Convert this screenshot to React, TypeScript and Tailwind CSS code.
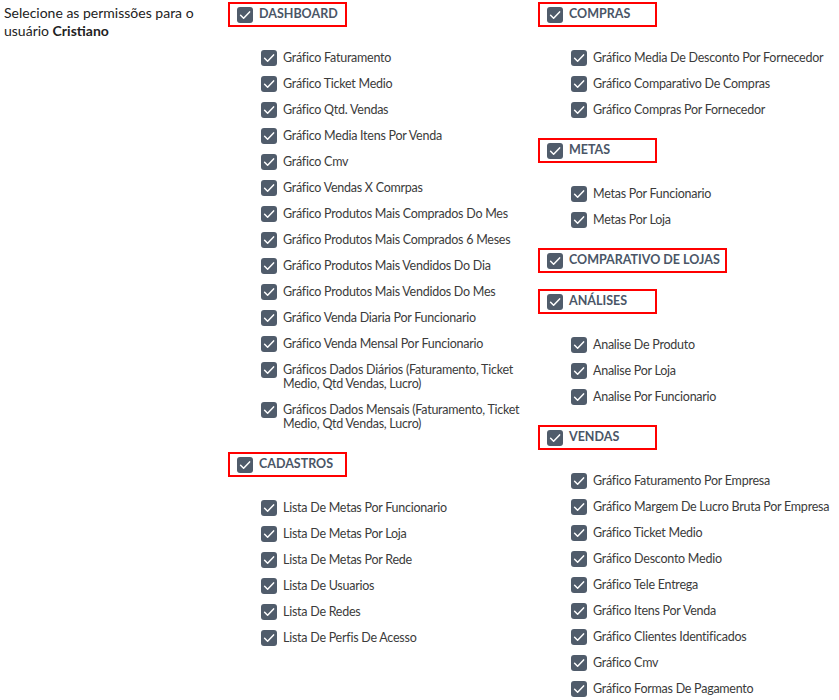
import type { ReactNode } from 'react';

interface Section {
  title: string;
  items: string[];
}

const leftSections: Section[] = [
  {
    title: 'DASHBOARD',
    items: [
      'Gráfico Faturamento',
      'Gráfico Ticket Medio',
      'Gráfico Qtd. Vendas',
      'Gráfico Media Itens Por Venda',
      'Gráfico Cmv',
      'Gráfico Vendas X Comrpas',
      'Gráfico Produtos Mais Comprados Do Mes',
      'Gráfico Produtos Mais Comprados 6 Meses',
      'Gráfico Produtos Mais Vendidos Do Dia',
      'Gráfico Produtos Mais Vendidos Do Mes',
      'Gráfico Venda Diaria Por Funcionario',
      'Gráfico Venda Mensal Por Funcionario',
      'Gráficos Dados Diários (Faturamento, Ticket Medio, Qtd Vendas, Lucro)',
      'Gráficos Dados Mensais (Faturamento, Ticket Medio, Qtd Vendas, Lucro)',
    ],
  },
  {
    title: 'CADASTROS',
    items: [
      'Lista De Metas Por Funcionario',
      'Lista De Metas Por Loja',
      'Lista De Metas Por Rede',
      'Lista De Usuarios',
      'Lista De Redes',
      'Lista De Perfis De Acesso',
    ],
  },
];

const rightSections: Section[] = [
  {
    title: 'COMPRAS',
    items: [
      'Gráfico Media De Desconto Por Fornecedor',
      'Gráfico Comparativo De Compras',
      'Gráfico Compras Por Fornecedor',
    ],
  },
  { title: 'METAS', items: ['Metas Por Funcionario', 'Metas Por Loja'] },
  { title: 'COMPARATIVO DE LOJAS', items: [] },
  {
    title: 'ANÁLISES',
    items: ['Analise De Produto', 'Analise Por Loja', 'Analise Por Funcionario'],
  },
  {
    title: 'VENDAS',
    items: [
      'Gráfico Faturamento Por Empresa',
      'Gráfico Margem De Lucro Bruta Por Empresa',
      'Gráfico Ticket Medio',
      'Gráfico Desconto Medio',
      'Gráfico Tele Entrega',
      'Gráfico Itens Por Venda',
      'Gráfico Clientes Identificados',
      'Gráfico Cmv',
      'Gráfico Formas De Pagamento',
    ],
  },
];

const CheckBox = () => (
  <span className="w-4 h-4 rounded-[3px] bg-[#505c6b] flex items-center justify-center flex-shrink-0">
    <svg viewBox="0 0 16 16" className="w-4 h-4" fill="none">
      <path d="M3.6 8.3 6.6 11.2 12.6 4.9" stroke="white" strokeWidth="1.5" strokeLinecap="round" strokeLinejoin="round" />
    </svg>
  </span>
);

const Item = ({ children, nowrap }: { children: ReactNode; nowrap?: boolean }) => (
  <div className="flex items-start gap-[6px]">
    <span className="h-[14px] flex items-center">
      <CheckBox />
    </span>
    <span
      className={`text-[12.5px] leading-[14px] tracking-[-0.25px] text-[#3b3b3b] ${nowrap ? 'whitespace-nowrap' : 'pr-[14px]'}`}
    >
      {children}
    </span>
  </div>
);

const SectionBlock = ({ section, nowrap }: { section: Section; nowrap?: boolean }) => (
  <div className="flex flex-col">
    {/* Header highlighted with the red frame */}
    <div className="self-start min-w-[119px] h-[25px] border-2 border-[#ff0000] pl-[7px] pr-[5px] flex items-center gap-[6px]">
      <CheckBox />
      <span className="text-[12.5px] font-bold text-[#4a5667] whitespace-nowrap">{section.title}</span>
    </div>
    {section.items.length > 0 && (
      <div className="mt-[23.5px] mb-[5.5px] pl-[33px] flex flex-col gap-[12px]">
        {section.items.map((item) => (
          <Item key={item} nowrap={nowrap}>
            {item}
          </Item>
        ))}
      </div>
    )}
  </div>
);

export default function App() {
  return (
    <div className="h-[700px] w-[839px] overflow-hidden bg-white flex font-['Lato','Open_Sans',sans-serif]">
      <div className="w-[228px] flex-shrink-0 pl-[4px] pt-[4px]">
        <p className="w-[205px] text-[14px] leading-[18px] text-[#222]">
          Selecione as permissões para o usuário <b>Cristiano</b>
        </p>
      </div>
      <div className="w-[310px] flex-shrink-0 pt-[2px] flex flex-col gap-[16px]">
        {leftSections.map((s) => (
          <SectionBlock key={s.title} section={s} />
        ))}
      </div>
      <div className="flex-1 pt-[2px] flex flex-col gap-[16px]">
        {rightSections.map((s) => (
          <SectionBlock key={s.title} section={s} nowrap />
        ))}
      </div>
    </div>
  );
}
